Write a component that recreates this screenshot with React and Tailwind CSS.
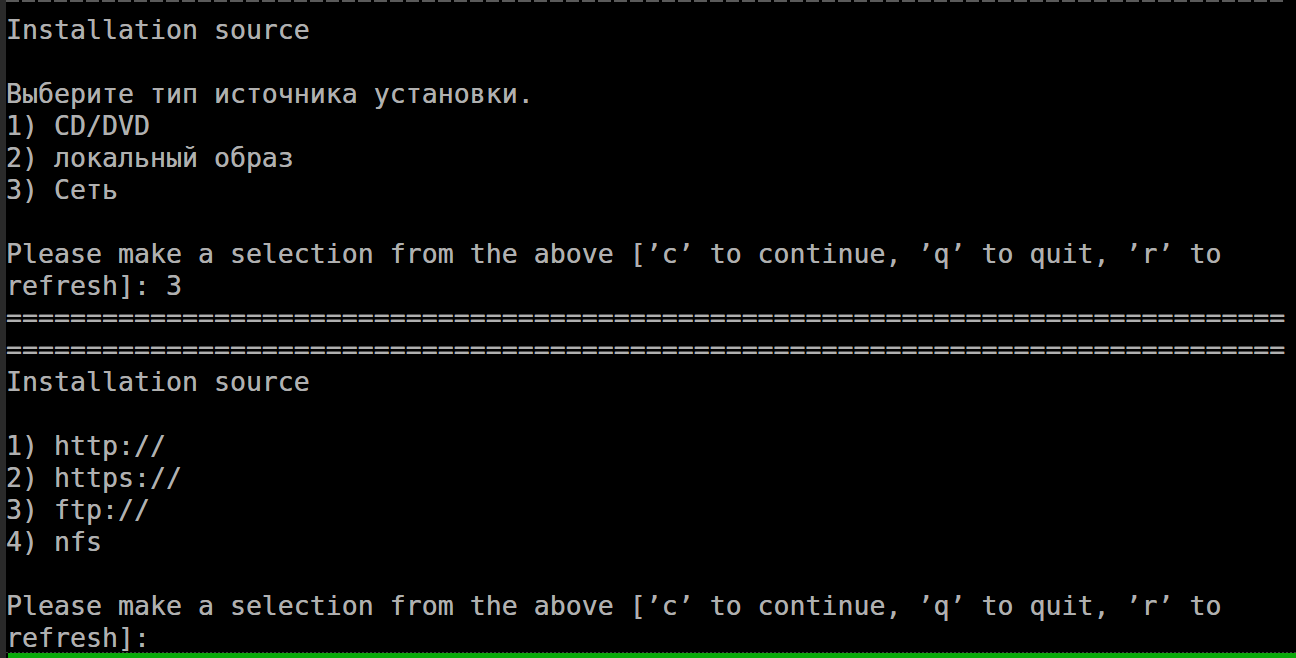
import React from "react";

const EQ = "=".repeat(80);
const Q = "Please make a selection from the above [’c’ to continue, ’q’ to quit, ’r’ to";

const lines = [
  "Installation source",
  "",
  "Выберите тип источника установки.",
  "1) CD/DVD",
  "2) локальный образ",
  "3) Сеть",
  "",
  Q,
  "refresh]: 3",
  EQ,
  EQ,
  "Installation source",
  "",
  "1) http://",
  "2) https://",
  "3) ftp://",
  "4) nfs",
  "",
  Q,
  "refresh]:",
];

export default function App() {
  return (
    <div className="flex h-[658px] w-[1296px] overflow-hidden bg-black">
      <div className="w-[6px] shrink-0 bg-[#2a2a2a]" />
      <div className="flex min-w-0 flex-1 flex-col">
        <div className="h-[2px] w-[1280px] bg-[repeating-linear-gradient(90deg,#5a5a5a_0_13px,transparent_13px_16px)]" />
        <div className="h-[11px]" />
        <div
          className="flex flex-col whitespace-pre text-[26.576px] leading-[32px] text-[#b0b0b0] [text-shadow:0_0_0.6px_#b0b0b0]"
          style={{ fontFamily: '"DejaVu Sans Mono", "Liberation Mono", monospace' }}
        >
          {lines.map((l, i) => (
            <div key={i} className="h-[32px] pt-[2px]">
              {l === "" ? "\u00a0" : l}
            </div>
          ))}
        </div>
        <div className="h-px bg-[repeating-linear-gradient(90deg,#3a3a3a_0_2px,transparent_2px_4px)]" />
        <div className="ml-[2px] h-[5px] bg-[#0aa80a]" />
      </div>
    </div>
  );
}
